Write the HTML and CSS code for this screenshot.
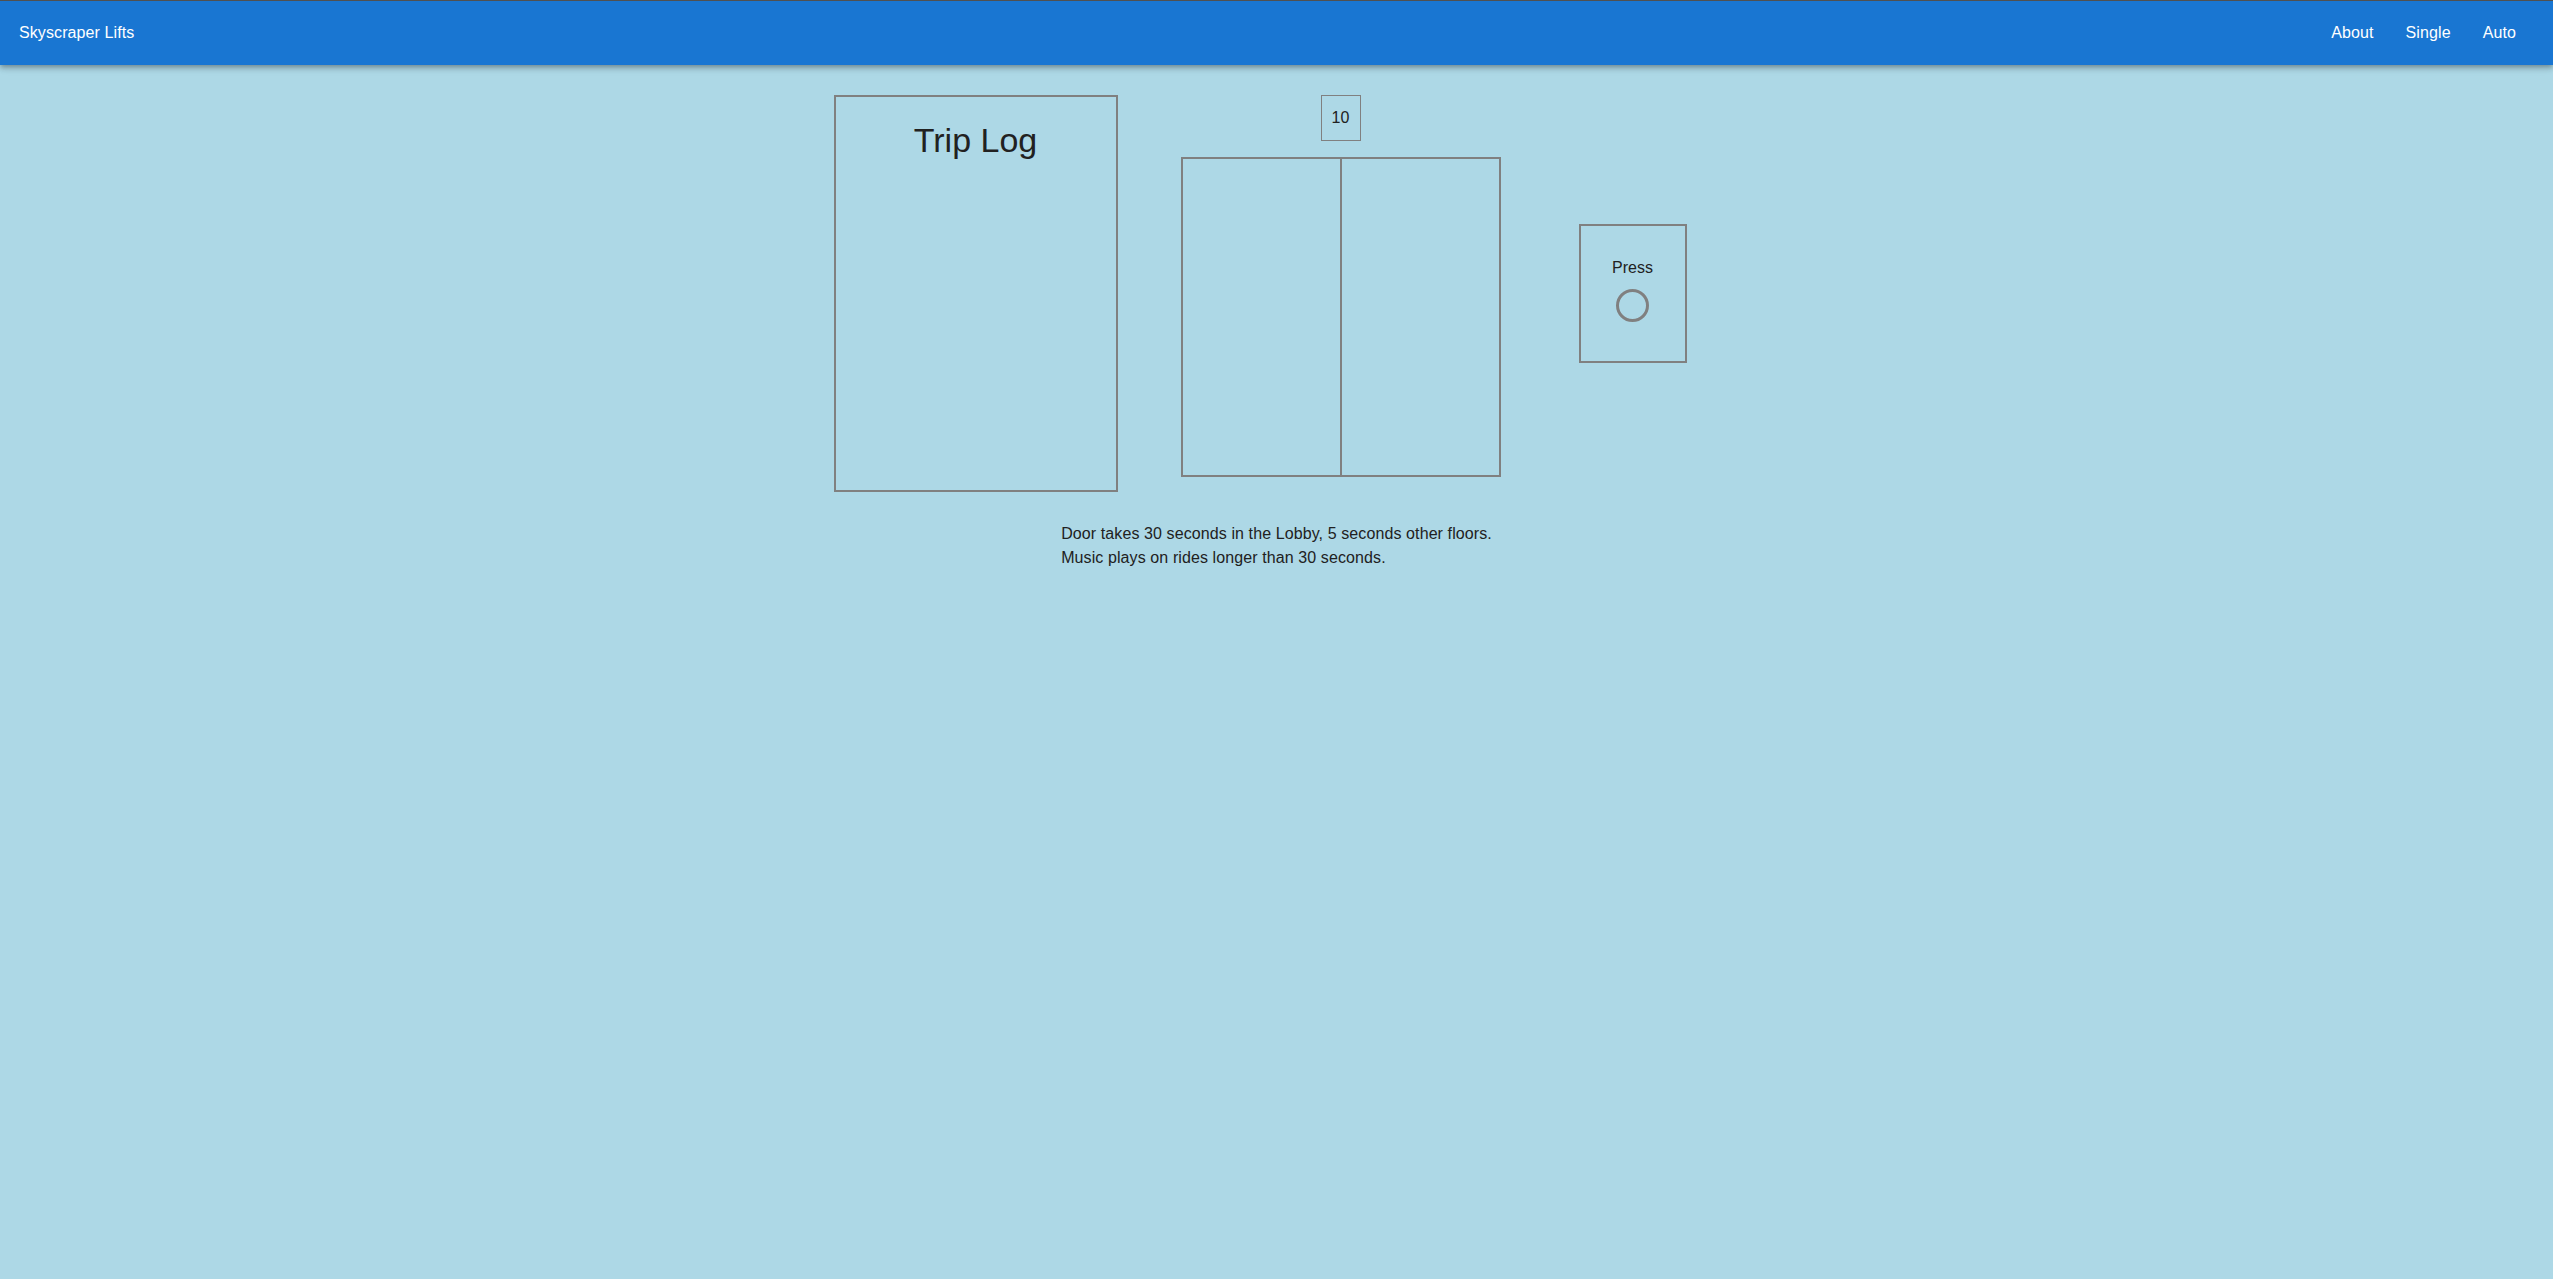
FILE: index.html
```html
<!DOCTYPE html>
<html lang="en">
<head>
<meta charset="utf-8">
<title>Skyscraper Lifts</title>
<link rel="stylesheet" href="styles.css">
</head>
<body>
<header class="toolbar">
  <span class="brand">Skyscraper Lifts</span>
  <nav class="nav">
    <a class="nav-link" href="#">About</a>
    <a class="nav-link" href="#">Single</a>
    <a class="nav-link" href="#">Auto</a>
  </nav>
</header>
<main class="main">
  <section class="row">
    <div class="trip-log">
      <h2 class="trip-title">Trip Log</h2>
    </div>
    <div class="shaft">
      <div class="floor-indicator">10</div>
      <div class="elevator">
        <div class="door door-left"></div>
        <div class="door"></div>
      </div>
    </div>
    <div class="call-panel">
      <div class="call-label">Press</div>
      <div class="call-button"></div>
    </div>
  </section>
  <p class="notes">Door takes 30 seconds in the Lobby, 5 seconds other floors.<br>Music plays on rides longer than 30 seconds.</p>
</main>
</body>
</html>
```
FILE: styles.css
```css
html, body {
  margin: 0;
  padding: 0;
}
body {
  background: #add8e6;
  font-family: "Liberation Sans", Arial, sans-serif;
  font-size: 16px;
  line-height: 24px;
  color: #212121;
  min-height: 1279px;
}
.toolbar {
  display: flex;
  align-items: center;
  justify-content: space-between;
  height: 64px;
  border-top: 1px solid #505050;
  background: #1976d2;
  color: #fff;
  padding: 0 37px 0 19px;
  box-shadow: 0 2px 4px -1px rgba(0,0,0,.2), 0 4px 5px 0 rgba(0,0,0,.14), 0 1px 10px 0 rgba(0,0,0,.12);
  position: relative;
  letter-spacing: 0.1px;
}
.brand {
  font-size: 16px;
}
.nav {
  display: flex;
  gap: 32px;
}
.nav-link {
  color: #fff;
  text-decoration: none;
}
.main {
  padding-top: 30px;
  display: flex;
  flex-direction: column;
  align-items: center;
}
.row {
  display: flex;
  align-items: center;
  padding-right: 33px;
}
.trip-log {
  box-sizing: border-box;
  width: 284px;
  height: 397px;
  border: 2px solid #808080;
  text-align: center;
}
.trip-title {
  margin: 24px 0 0;
  font-size: 34px;
  font-weight: normal;
  line-height: 39px;
  color: #212121;
}
.shaft {
  align-self: flex-start;
  margin-left: 63px;
  display: flex;
  flex-direction: column;
  align-items: center;
  gap: 16px;
}
.floor-indicator {
  box-sizing: border-box;
  width: 40px;
  height: 46px;
  border: 1px solid #808080;
  display: flex;
  align-items: center;
  justify-content: center;
  color: #212121;
}
.elevator {
  box-sizing: border-box;
  width: 320px;
  height: 320px;
  border: 2px solid #808080;
  display: flex;
}
.door {
  flex: 1;
}
.door-left {
  border-right: 2px solid #808080;
}
.call-panel {
  box-sizing: border-box;
  width: 108px;
  height: 139px;
  margin-left: 78px;
  border: 2px solid #808080;
  padding-top: 30px;
  display: flex;
  flex-direction: column;
  align-items: center;
  gap: 9px;
}
.call-label {
  color: #212121;
}
.call-button {
  box-sizing: border-box;
  width: 33px;
  height: 33px;
  border: 3px solid #808080;
  border-radius: 50%;
}
.notes {
  margin: 30px 0 0;
  color: #212121;
  letter-spacing: 0.1px;
}
```
